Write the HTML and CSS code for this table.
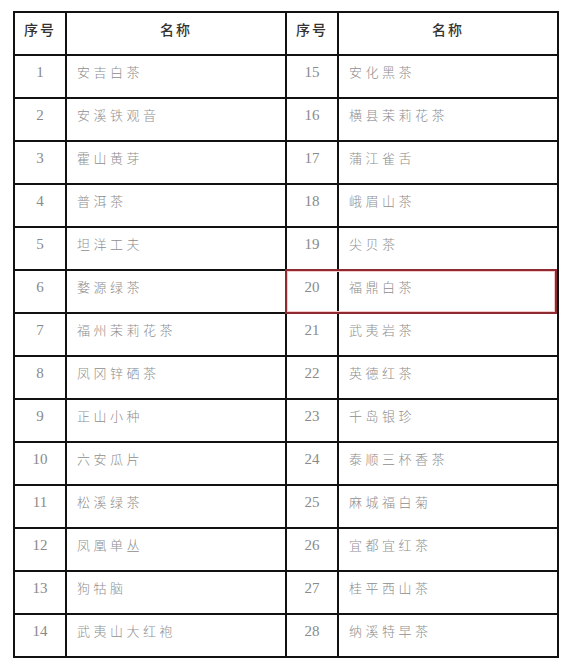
FILE: index.html
```html
<!DOCTYPE html>
<html lang="zh">
<head>
<meta charset="utf-8">
<link rel="stylesheet" href="styles.css">
</head>
<body>
<div class="wrap">
<table class="tea">
  <colgroup>
    <col class="c-no"><col class="c-name"><col class="c-no"><col class="c-name">
  </colgroup>
  <thead>
    <tr><th>序号</th><th>名称</th><th>序号</th><th>名称</th></tr>
  </thead>
  <tbody>
    <tr><td class="num">1</td><td class="nm">安吉白茶</td><td class="num">15</td><td class="nm">安化黑茶</td></tr>
    <tr><td class="num">2</td><td class="nm">安溪铁观音</td><td class="num">16</td><td class="nm">横县茉莉花茶</td></tr>
    <tr><td class="num">3</td><td class="nm">霍山黄芽</td><td class="num">17</td><td class="nm">蒲江雀舌</td></tr>
    <tr><td class="num">4</td><td class="nm">普洱茶</td><td class="num">18</td><td class="nm">峨眉山茶</td></tr>
    <tr><td class="num">5</td><td class="nm">坦洋工夫</td><td class="num">19</td><td class="nm">尖贝茶</td></tr>
    <tr><td class="num">6</td><td class="nm">婺源绿茶</td><td class="num">20</td><td class="nm">福鼎白茶</td></tr>
    <tr><td class="num">7</td><td class="nm">福州茉莉花茶</td><td class="num">21</td><td class="nm">武夷岩茶</td></tr>
    <tr><td class="num">8</td><td class="nm">凤冈锌硒茶</td><td class="num">22</td><td class="nm">英德红茶</td></tr>
    <tr><td class="num">9</td><td class="nm">正山小种</td><td class="num">23</td><td class="nm">千岛银珍</td></tr>
    <tr><td class="num">10</td><td class="nm">六安瓜片</td><td class="num">24</td><td class="nm">泰顺三杯香茶</td></tr>
    <tr><td class="num">11</td><td class="nm">松溪绿茶</td><td class="num">25</td><td class="nm">麻城福白菊</td></tr>
    <tr><td class="num">12</td><td class="nm">凤凰单丛</td><td class="num">26</td><td class="nm">宜都宜红茶</td></tr>
    <tr><td class="num">13</td><td class="nm">狗牯脑</td><td class="num">27</td><td class="nm">桂平西山茶</td></tr>
    <tr><td class="num">14</td><td class="nm">武夷山大红袍</td><td class="num">28</td><td class="nm">纳溪特早茶</td></tr>
  </tbody>
</table>
<div class="mark"></div>
</div>
</body>
</html>
```
FILE: styles.css
```css
html, body {
  margin: 0;
  padding: 0;
  background: #ffffff;
}
body {
  font-family: "Liberation Serif", "Noto Sans CJK SC", serif;
}
.wrap {
  position: relative;
  padding: 11px 0 0 13px;
}
.tea {
  border-collapse: collapse;
  table-layout: fixed;
  width: 545px;
}
.c-no { width: 52px; }
.c-name { width: 220px; }
.tea th, .tea td {
  border: 2px solid #111;
  height: 43px;
  padding: 7px 0 0 0;
  box-sizing: border-box;
  vertical-align: top;
  line-height: 18px;
}
.tea th {
  font-family: "Noto Sans CJK SC", sans-serif;
  font-weight: 500;
  font-size: 14px;
  color: #333;
  letter-spacing: 2px;
  text-align: center;
}
.tea td.num {
  text-align: center;
  font-family: "Liberation Serif", serif;
  font-size: 15px;
  color: #8a8a8a;
}
.tea td.nm {
  padding-left: 10px;
  font-family: "Noto Sans CJK SC", sans-serif;
  font-weight: 300;
  font-size: 13px;
  letter-spacing: 3.5px;
  color: #8e8e8e;
}
.mark {
  position: absolute;
  left: 285px;
  top: 269px;
  width: 272px;
  height: 45px;
  box-sizing: border-box;
  border: 2px solid #8f2a33;
  box-shadow: inset 0 0 0 1px #f3c9c9;
}
```
